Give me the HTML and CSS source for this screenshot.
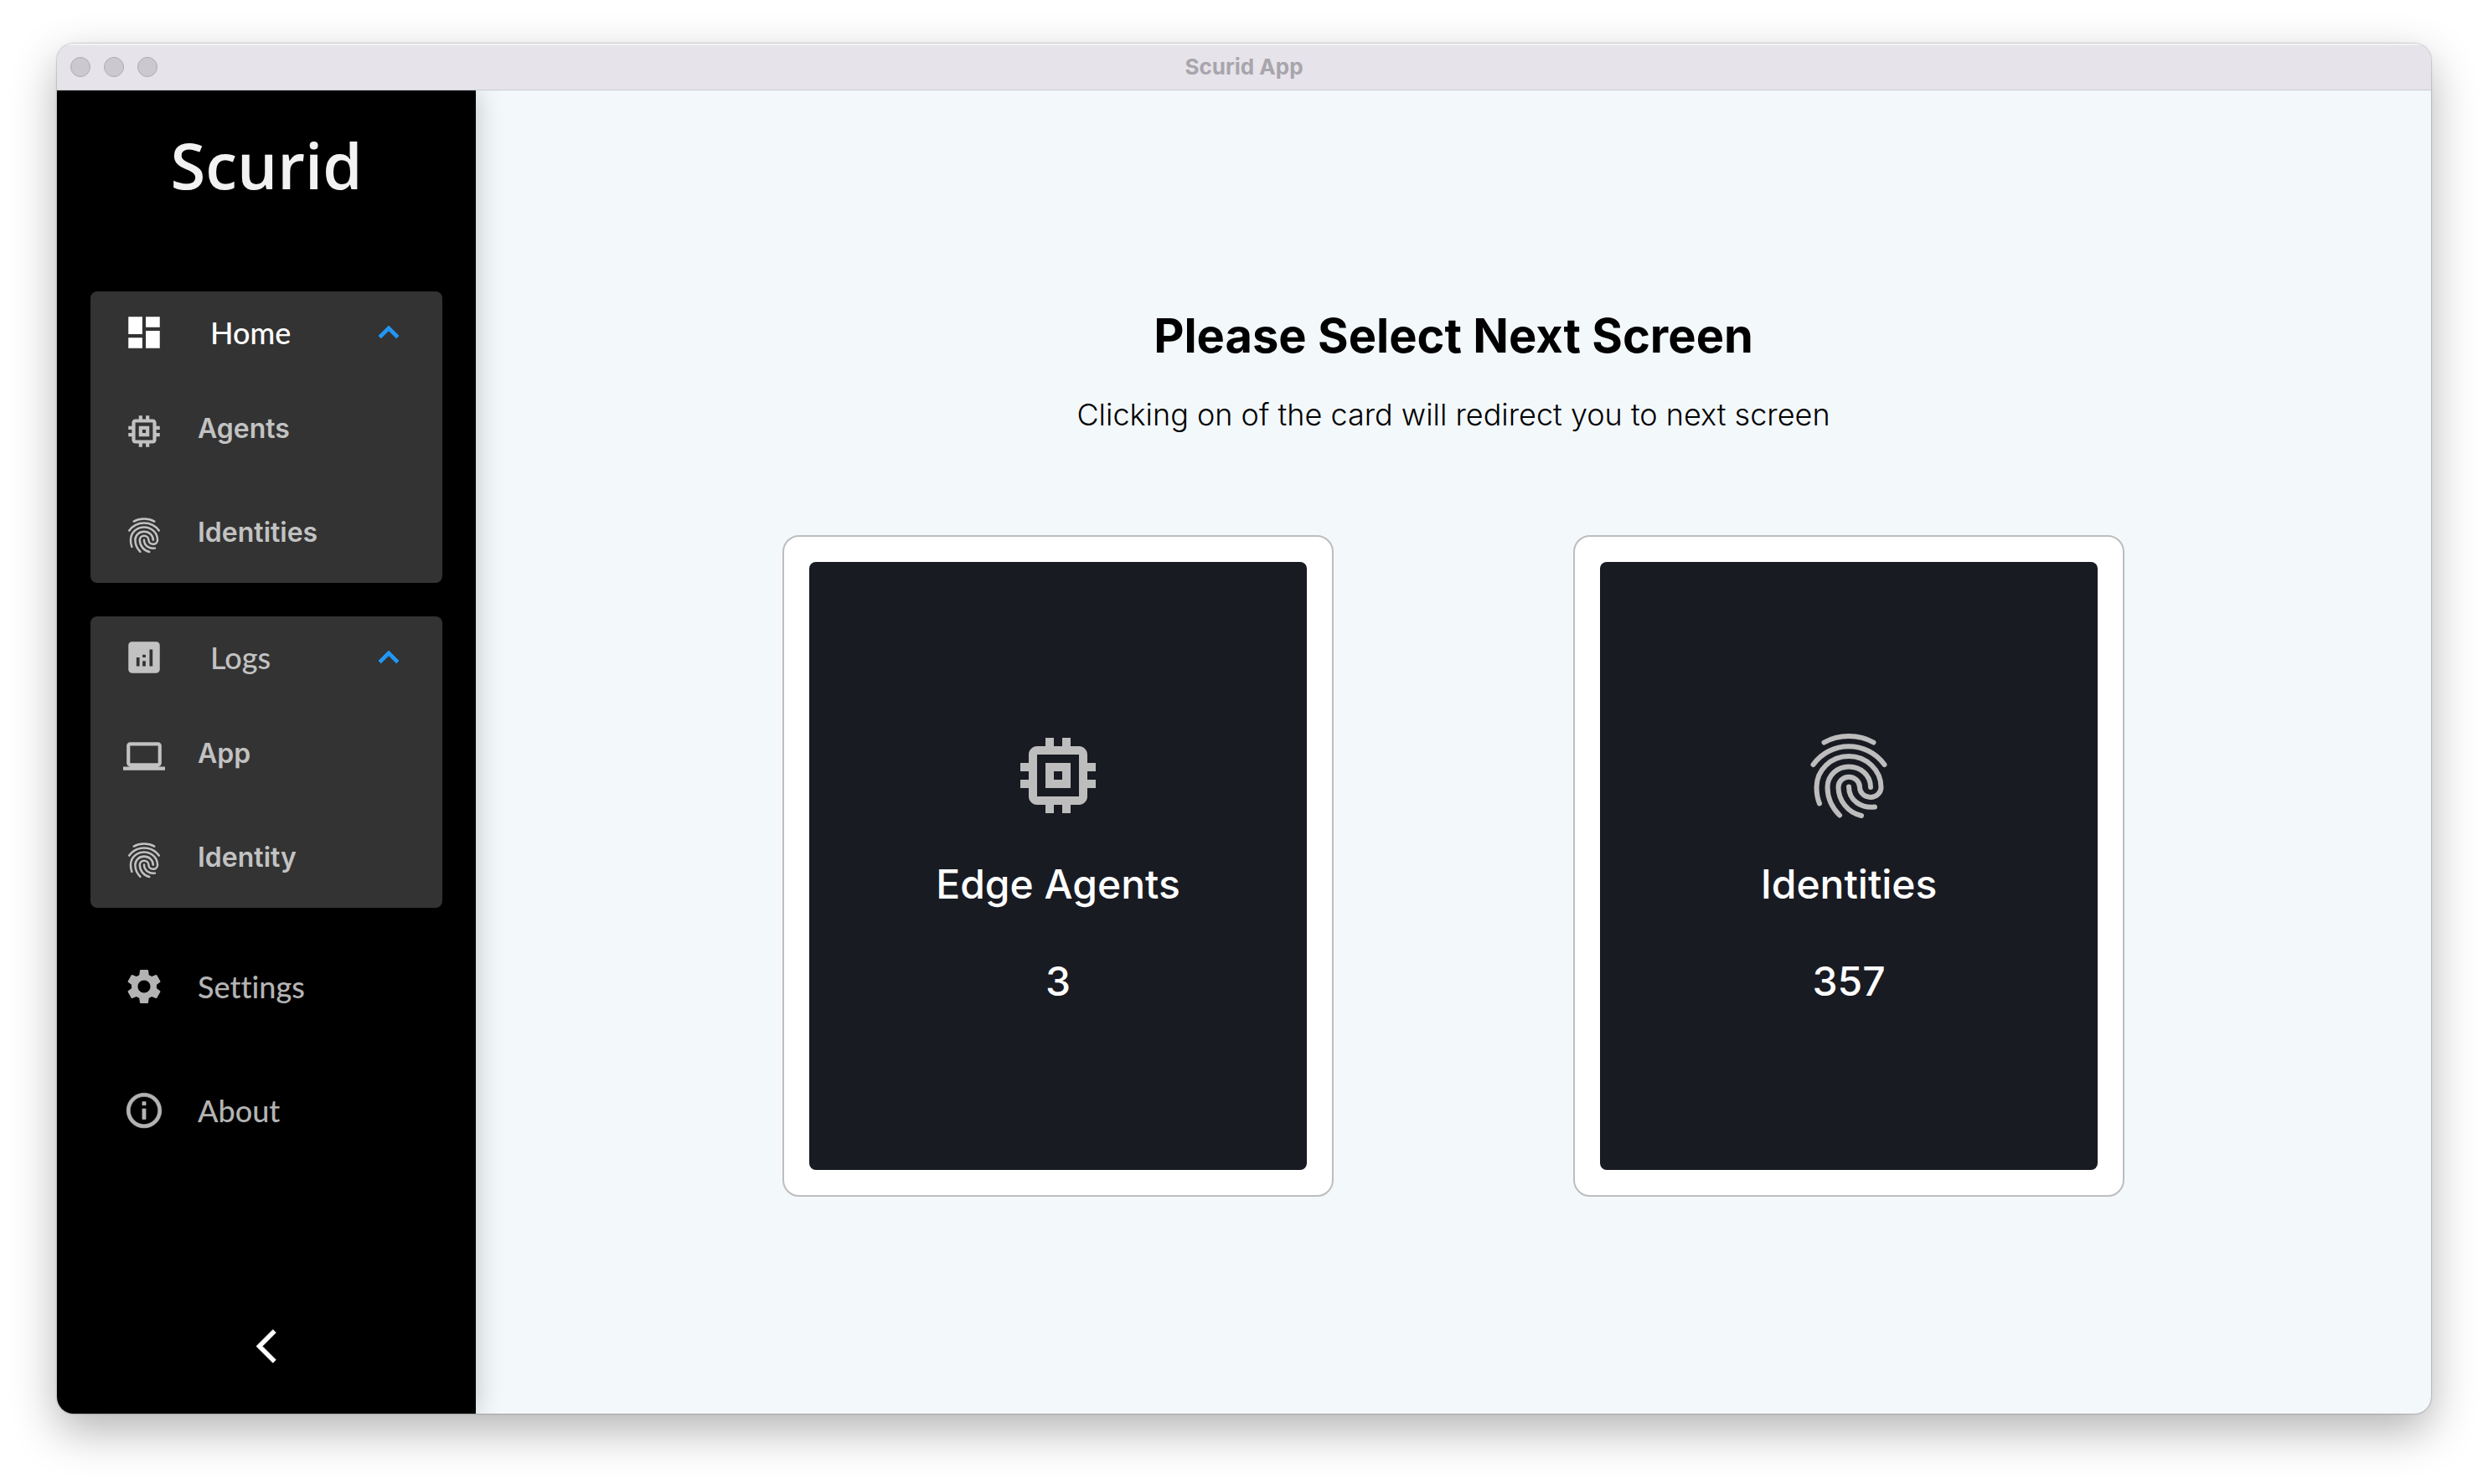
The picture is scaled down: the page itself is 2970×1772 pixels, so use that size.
FILE: index.html
```html
<!DOCTYPE html>
<html lang="en">
<head>
<meta charset="utf-8">
<meta name="viewport" content="width=device-width, initial-scale=1">
<title>Scurid App</title>
<link rel="stylesheet" href="styles.css">
</head>
<body>
<svg class="sprite" aria-hidden="true">
  <symbol id="chip" viewBox="0 0 24 24"><path fill-rule="evenodd" d="M15 9H9v6h6V9zm-2 4h-2v-2h2v2zm8-2V9h-2V7c0-1.100-.9-2-2-2h-2V3h-2v2h-2V3H9v2H7c-1.100 0-2 .9-2 2v2H3v2h2v2H3v2h2v2c0 1.100.9 2 2 2h2v2h2v-2h2v2h2v-2h2c1.100 0 2-.9 2-2v-2h2v-2h-2v-2h2zm-4 6H7V7h10v10z"/></symbol>
  <symbol id="finger" viewBox="0 0 24 24"><g fill="none" stroke="currentColor" stroke-width="1.200" stroke-linecap="round">
    <path d="M6.100 4.100C9.600 2.100 14.400 2.100 17.900 4.100"/>
    <path d="M3.500 9.400C7.600 3.600 16.400 3.600 20.500 9.400"/>
    <path d="M5 18.700C4.500 17.500 4.300 16.200 4.300 14.800C4.300 10.700 7.700 7.400 12 7.400C16.200 7.400 19.700 10.700 19.700 14.800C19.700 16.100 18.600 17.200 17.200 17.200C15.700 17.200 14.600 16.100 14.600 14.800C14.600 13.400 13.400 12.350 12 12.350C10.600 12.350 9.500 13.400 9.500 14.800C9.500 18 11.800 20.900 15 21.600"/>
    <path d="M9.800 21.500C8 19.700 6.900 17.400 6.900 14.800C6.900 12 9.200 9.900 12 9.900C14.900 9.900 17.200 12 17.200 14.800"/>
    <path d="M12 14.700C12 17.900 14.900 19.900 18.200 19.500"/>
  </g></symbol>
</svg>
<div class="window">
  <header class="titlebar">
    <div class="lights"><span class="light"></span><span class="light"></span><span class="light"></span></div>
    <span class="app-name">Scurid App</span>
  </header>
  <div class="body">
    <nav class="sidebar" aria-label="Main">
      <div class="logo">Scurid</div>
      <div class="group">
        <button class="group-head active" type="button" aria-expanded="true">
          <svg class="icon" viewBox="0 0 24 24"><path d="M3 13h8V3H3v10zm0 8h8v-6H3v6zm10 0h8V11h-8v10zm0-18v6h8V3h-8z"/></svg>
          <span class="label">Home</span>
          <svg class="chevron" viewBox="0 0 24 24"><path stroke="currentColor" stroke-width=".5" d="M12 8l-6 6 1.410 1.410L12 10.830l4.590 4.580L18 14z"/></svg>
        </button>
        <a class="sub" href="#agents"><svg class="icon"><use href="#chip"/></svg><span class="sub-label">Agents</span></a>
        <a class="sub" href="#identities"><svg class="icon"><use href="#finger"/></svg><span class="sub-label">Identities</span></a>
      </div>
      <div class="group">
        <button class="group-head" type="button" aria-expanded="true">
          <svg class="icon" viewBox="0 0 24 24"><path fill-rule="evenodd" d="M19 3H5c-1.100 0-2 .9-2 2v14c0 1.100.9 2 2 2h14c1.100 0 2-.9 2-2V5c0-1.100-.9-2-2-2zM9.400 17H7.600v-5h1.800v5zm3.500 0h-1.800v-3h1.800v3zm0-5h-1.800v-1.600h1.800V12zm4 5h-1.800V7.500h1.800V17z"/></svg>
          <span class="label">Logs</span>
          <svg class="chevron" viewBox="0 0 24 24"><path stroke="currentColor" stroke-width=".5" d="M12 8l-6 6 1.410 1.410L12 10.830l4.590 4.580L18 14z"/></svg>
        </button>
        <a class="sub" href="#app-logs"><svg class="icon" viewBox="0 0 24 24"><path fill-rule="evenodd" d="M20 18c1.100 0 2-.9 2-2V6c0-1.100-.9-2-2-2H4c-1.100 0-2 .9-2 2v10c0 1.100.9 2 2 2H0v2h24v-2h-4zM4 6h16v10H4V6z"/></svg><span class="sub-label">App</span></a>
        <a class="sub" href="#identity-logs"><svg class="icon"><use href="#finger"/></svg><span class="sub-label">Identity</span></a>
      </div>
      <a class="single" href="#settings"><svg class="icon" viewBox="0 0 24 24"><path d="M19.140 12.940c.04-.3.060-.61.060-.94 0-.32-.02-.64-.07-.94l2.030-1.580c.18-.14.23-.41.120-.61l-1.920-3.320c-.12-.22-.37-.29-.59-.22l-2.390.96c-.5-.38-1.030-.7-1.620-.94l-.36-2.540c-.04-.24-.24-.41-.48-.41h-3.840c-.24 0-.43.17-.47.41l-.36 2.540c-.59.24-1.130.57-1.620.94l-2.390-.96c-.22-.08-.47 0-.59.22L2.740 8.870c-.12.21-.08.470.120.610l2.030 1.580c-.05.3-.09.63-.09.94s.02.640.070.940l-2.030 1.580c-.18.140-.23.410-.12.610l1.920 3.320c.12.220.370.290.590.220l2.390-.96c.5.380 1.030.7 1.620.94l.36 2.540c.05.240.240.410.480.410h3.840c.24 0 .44-.17.470-.41l.36-2.540c.59-.24 1.130-.56 1.620-.94l2.390.96c.22.080.47 0 .59-.22l1.920-3.320c.12-.22.070-.47-.12-.61l-2.010-1.580zM12 15.600c-1.980 0-3.600-1.620-3.600-3.600s1.620-3.600 3.600-3.600 3.600 1.620 3.600 3.600-1.620 3.600-3.600 3.600z"/></svg><span class="label">Settings</span></a>
      <a class="single" href="#about"><svg class="icon" viewBox="0 0 24 24"><path stroke="currentColor" stroke-width=".3" d="M11 7h2v2h-2zm0 4h2v6h-2zm1-9C6.480 2 2 6.480 2 12s4.480 10 10 10 10-4.480 10-10S17.520 2 12 2zm0 18c-4.410 0-8-3.590-8-8s3.590-8 8-8 8 3.590 8 8-3.590 8-8 8z"/></svg><span class="label">About</span></a>
      <button class="collapse" type="button" aria-label="Collapse sidebar"><svg class="back" viewBox="0 2 12 20"><path stroke="currentColor" stroke-width=".4" d="M11.670 3.870L9.900 2.100 0 12l9.900 9.900 1.770-1.770L3.540 12z"/></svg></button>
    </nav>
    <main class="main">
      <h1 class="heading">Please Select Next Screen</h1>
      <p class="hint">Clicking on of the card will redirect you to next screen</p>
      <div class="cards">
        <a class="card" href="#agents"><span class="tile">
          <svg class="tile-icon"><use href="#chip"/></svg>
          <span class="tile-text">Edge Agents</span>
          <span class="tile-text">3</span>
        </span></a>
        <a class="card" href="#identities"><span class="tile">
          <svg class="tile-icon"><use href="#finger"/></svg>
          <span class="tile-text">Identities</span>
          <span class="tile-text">357</span>
        </span></a>
      </div>
    </main>
  </div>
</div>
</body>
</html>
```
FILE: styles.css
```css
* { box-sizing: border-box; }
body {
  margin: 0;
  min-height: 100vh;
  padding: 52px 68px 84px;
  display: flex;
  background: #fff;
  font-family: Inter, "Liberation Sans", sans-serif;
}
a { color: inherit; text-decoration: none; }
button { border: 0; padding: 0; background: none; color: inherit; font: inherit; text-align: left; cursor: pointer; }
svg { display: block; fill: currentColor; flex: none; }
.sprite { position: absolute; width: 0; height: 0; }

.window {
  flex: 1;
  display: flex;
  flex-direction: column;
  border-radius: 20px;
  overflow: hidden;
  background: #f3f8fb;
  box-shadow: 0 0 2px rgba(0, 0, 0, .5), 0 20px 54px rgba(0, 0, 0, .3);
}
.titlebar {
  height: 56px;
  display: grid;
  grid-template-columns: 1fr auto 1fr;
  align-items: center;
  padding: 0 16px 2px;
  background: #e6e3ea;
  border-top: 2px solid #f3f2f5;
  border-bottom: 1px solid #c9cdd2;
}
.lights { display: flex; gap: 16px; }
.light { width: 24px; height: 24px; border-radius: 50%; background: #cbc9cf; border: 1px solid #aeabb2; }
.app-name { font-size: 26px; line-height: 32px; font-weight: 700; color: #a8a5ac; }

.body { flex: 1; display: flex; }
.sidebar {
  width: 500px;
  flex: none;
  display: flex;
  flex-direction: column;
  padding: 46px 40px 52px;
  background: #000;
  color: #b3b3b3;
  box-shadow: 0 0 30px rgba(0, 0, 0, .22);
  clip-path: inset(0 -40px 0 0);
  z-index: 1;
}
.logo {
  height: 194px;
  font: 600 76px/86px "Open Sans", sans-serif;
  color: #f2f2f2;
  text-align: center;
}
.group {
  height: 348px;
  margin-bottom: 40px;
  border-radius: 8px;
  background: #333;
  color: #c2c2c2;
}
.group-head { display: flex; align-items: center; width: 100%; height: 98px; padding: 0 40px 0 39px; }
.group-head .label { flex: 1; margin-left: 54px; }
.active { color: #fff; }
.icon { width: 50px; height: 50px; }
.chevron { width: 48px; height: 48px; color: #2196f3; }
.label { font: 500 36px/46px Lato, sans-serif; font-variant-ligatures: none; }
.sub { display: flex; align-items: center; height: 124px; padding: 14px 39px 0; }
.sub-label { margin: 0 0 6px 39px; font-size: 32px; line-height: 40px; font-weight: 600; }
.single { display: flex; align-items: center; height: 148px; padding: 0 39px; }
.single .label { margin-left: 39px; }
.group + .single { margin-top: -20px; }
.collapse { margin: auto auto 0; padding: 8px; color: #fff; }
.back { width: 24px; height: 41px; }

.main { flex: 1; display: flex; flex-direction: column; padding: 259px 80px 0; text-align: center; color: #000; }
.heading { margin: 0; font-size: 56px; line-height: 68px; font-weight: 700; }
.hint { margin: 38px 0 0; font-size: 36px; line-height: 44px; font-weight: 300; }
.cards { display: flex; justify-content: space-evenly; margin-top: 122px; }
.card { width: 658px; padding: 30px; background: #fff; border: 2px solid #bdbdbd; border-radius: 20px; }
.tile {
  height: 726px;
  display: flex;
  flex-direction: column;
  align-items: center;
  justify-content: center;
  border-radius: 8px;
  background: #191b23;
  color: #fff;
}
.tile-icon { width: 120px; height: 120px; margin-bottom: 40px; color: #bdbdbd; }
.tile-text { font-size: 48px; line-height: 60px; font-weight: 500; }
.tile-text + .tile-text { margin-top: 56px; }
```
